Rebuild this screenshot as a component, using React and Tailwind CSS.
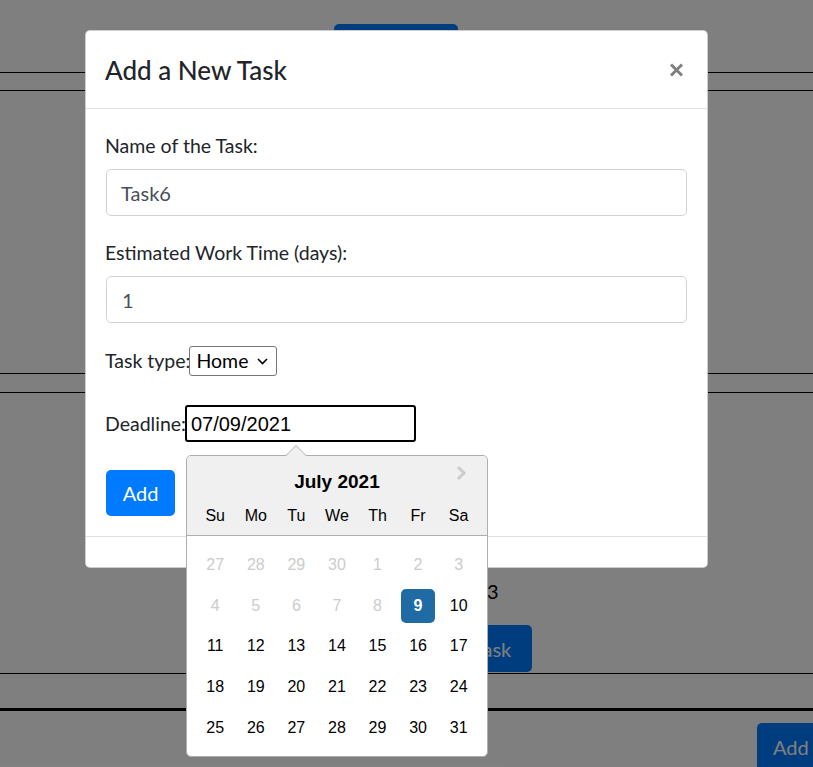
import React from "react";

const weeks = [
  [27, 28, 29, 30, 1, 2, 3],
  [4, 5, 6, 7, 8, 9, 10],
  [11, 12, 13, 14, 15, 16, 17],
  [18, 19, 20, 21, 22, 23, 24],
  [25, 26, 27, 28, 29, 30, 31],
];
const dayNames = ["Su", "Mo", "Tu", "We", "Th", "Fr", "Sa"];

function DatePickerPopup() {
  return (
    <div className="absolute left-[1px] top-[50px] z-10 w-[302px] rounded-[5px] border border-[#aeaeae] bg-white font-['Liberation_Sans',Arial,sans-serif] text-[16px] text-black">
      <svg className="absolute left-[98px] top-[-11px]" width="22" height="13" viewBox="0 0 22 13">
        <polygon points="0,11.5 11,0.5 22,11.5" fill="#f0f0f0" stroke="#aeaeae" strokeWidth="1" />
        <rect x="1" y="11" width="20" height="2" fill="#f0f0f0" />
      </svg>
      <div className="relative h-[80px] rounded-t-[5px] border-b border-[#aeaeae] bg-[#f0f0f0]">
        <svg className="absolute left-[268px] top-[9px]" width="12" height="16" viewBox="0 0 12 16">
          <polyline points="3,2 9,8 3,14" fill="none" stroke="#cccccc" strokeWidth="3" />
        </svg>
        <div className="pt-[14px] text-center text-[19px] font-bold leading-[24px]">July 2021</div>
        <div className="mt-[5px] grid grid-cols-7 px-[8px]">
          {dayNames.map((d) => (
            <div key={d} className="text-center leading-[34px]">{d}</div>
          ))}
        </div>
      </div>
      <div className="px-[8px] pb-[8px] pt-[9px]">
        {weeks.map((w, wi) => (
          <div key={wi} className="grid h-[40.6px] grid-cols-7">
            {w.map((d, di) => {
              const muted = wi === 0 || (wi === 1 && d < 9);
              const selected = wi === 1 && d === 9;
              return (
                <div key={di} className="flex items-center justify-center">
                  <div
                    className={
                      selected
                        ? "flex h-[34px] w-[34px] items-center justify-center rounded-[5px] bg-[#216ba5] font-bold text-white"
                        : muted
                        ? "flex h-[34px] w-[34px] items-center justify-center text-[#cccccc]"
                        : "flex h-[34px] w-[34px] items-center justify-center"
                    }
                  >
                    {d}
                  </div>
                </div>
              );
            })}
          </div>
        ))}
      </div>
    </div>
  );
}

export default function App() {
  return (
    <div className="relative h-[767px] overflow-hidden bg-white font-['Lato','Noto_Sans',sans-serif] text-[20px] text-[#212529]">
      {/* page behind the modal */}
      <div className="pt-[24px]">
        <div className="pl-[334px]">
          <div className="h-[48px] w-[124px] rounded-[5px] bg-[#007bff]" />
        </div>
        <div className="h-[19px] border-y border-black" />
        <div className="h-[282px]" />
        <div className="h-[20px] border-y border-black" />
        <div className="mt-[183px] h-[30px] pl-[487px] leading-[30px] text-black">3</div>
        <div className="mt-[19px] pl-[412px]">
          <div className="flex h-[47px] w-[120px] items-center justify-center rounded-[5px] bg-[#007bff] text-white">Add Task</div>
        </div>
        <div className="mt-[1px] h-[35px] border-t border-black" />
        <div className="border-t-[3px] border-black" />
        <div className="mt-[12px] pl-[757px]">
          <div className="flex h-[48px] w-[80px] items-center rounded-[5px] bg-[#007bff] pl-[16px] text-white">Add</div>
        </div>
      </div>

      {/* backdrop */}
      <div className="absolute inset-0 bg-black/50" />

      {/* modal */}
      <div className="absolute left-[85px] top-[30px] w-[623px] rounded-[5px] border border-black/20 bg-white">
        <div className="flex h-[78px] items-center justify-between border-b border-[#dee2e6] pl-[19px] pr-[20px]">
          <div className="pt-[2px] text-[26px] font-medium leading-[37px] text-[#212529]">Add a New Task</div>
          <svg className="mr-[3px]" width="15" height="14" viewBox="0 0 15 14">
            <path d="M2 1.5 L13 12.5 M13 1.5 L2 12.5" stroke="#808080" strokeWidth="3" />
          </svg>
        </div>
        <div className="px-[20px] pb-[20px] pt-[20px] text-[19.5px]">
          <div className="mb-[10px] ml-[-1px] h-[30px] pt-[2px] leading-[30px]">Name of the Task:</div>
          <div className="mb-[20px] flex h-[47px] items-center rounded-[5px] border border-[#ced4da] px-[14px] text-[20px] text-[#495057]">Task6</div>
          <div className="mb-[10px] ml-[-1px] h-[30px] pt-[2px] leading-[30px]">Estimated Work Time (days):</div>
          <div className="flex h-[47px] items-center rounded-[5px] border border-[#ced4da] px-[15px] text-[20px] text-[#495057]">1</div>
          <div className="ml-[-1px] mt-[20px] flex h-[36px] items-center">
            <span>Task type:</span>
            <div className="ml-[-1px] flex h-[30px] w-[88px] items-center justify-between rounded-[3px] border border-[#767676] pl-[6px] pr-[8px] text-black">
              <span>Home</span>
              <svg width="11" height="7" viewBox="0 0 11 7">
                <polyline points="1,1 5.5,5.5 10,1" fill="none" stroke="#000" strokeWidth="1.6" />
              </svg>
            </div>
          </div>
          <div className="ml-[-1px] mt-[26px] flex h-[37px] items-center">
            <span>Deadline:</span>
            <div className="relative ml-[-1px]">
              <div className="flex h-[37px] w-[231px] items-center rounded-[3px] border-2 border-black pl-[4px] font-['Liberation_Sans',Arial,sans-serif] text-[20px] text-black">
                07/09/2021
              </div>
              <DatePickerPopup />
            </div>
          </div>
          <div className="mt-[28px] flex h-[46px] w-[69px] items-center justify-center rounded-[5px] bg-[#007bff] text-[20px] text-white">Add</div>
        </div>
        <div className="h-[31px] border-t border-[#dee2e6]" />
      </div>
    </div>
  );
}
